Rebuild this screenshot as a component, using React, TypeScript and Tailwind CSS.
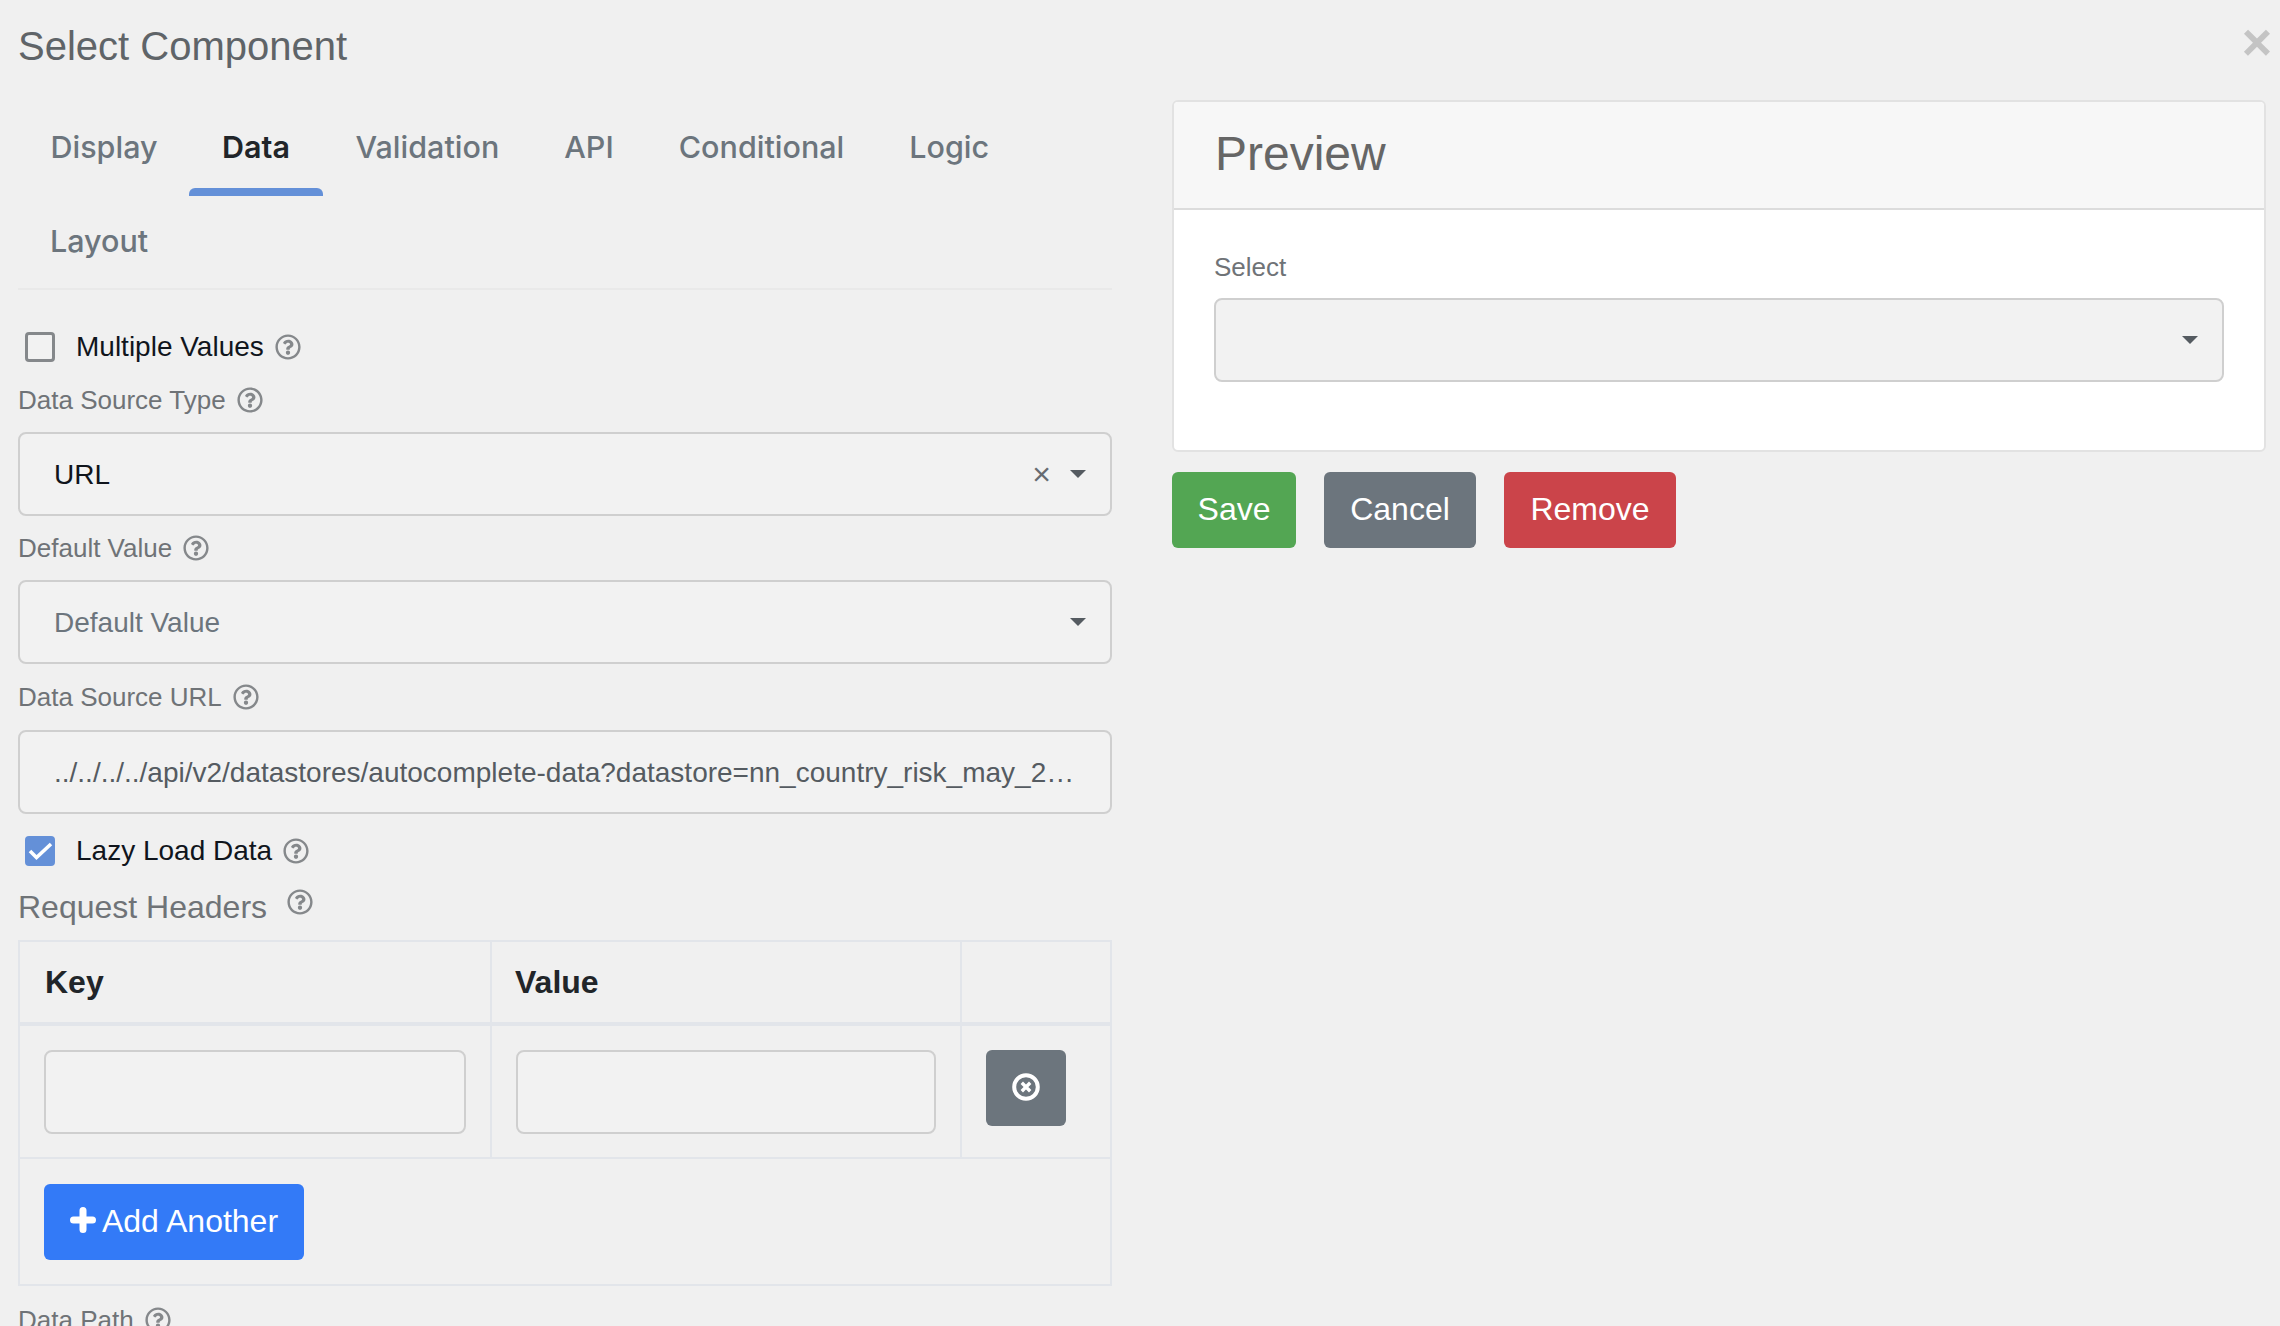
import React from 'react';
import { FaRegQuestionCircle } from 'react-icons/fa';

const tabs = ['Display', 'Data', 'Validation', 'API', 'Conditional', 'Logic'];

function Help({ className = '' }: { className?: string }) {
  return <FaRegQuestionCircle className={`inline-block w-[26px] h-[26px] text-[#85888b] ${className}`} />;
}

function Caret() {
  return <span className="w-0 h-0 border-x-[8px] border-x-transparent border-t-[8px] border-t-[#555b61]" />;
}

function FieldLabel({ text }: { text: string }) {
  return (
    <div className="flex items-center gap-[11px] h-[32px] text-[26px] text-[#6f7377]">
      <span>{text}</span>
      <Help />
    </div>
  );
}

export default function App() {
  return (
    <div className="relative h-[1326px] w-[2280px] overflow-hidden bg-[#f0f0f0] font-['Liberation_Sans',Arial,sans-serif]">
      <button className="absolute right-[8px] top-[17px] text-[52px] leading-[50px] font-bold text-[#c4c4c4]">×</button>
      <div className="flex gap-[60px] pl-[18px]">
        {/* Left column */}
        <div className="w-[1094px] shrink-0">
          <h1 className="h-[100px] pt-[22px] text-[40px] leading-[48px] text-[#5f6468]">Select Component</h1>

          <div className="border-b-2 border-[#e9e9e9] h-[190px]">
            <div className="flex">
              {tabs.map((t) => (
                <div
                  key={t}
                  className={`flex flex-col justify-between h-[96px] pt-[27px] text-[30.5px] leading-[40px] font-['Inter',sans-serif] ${
                    t === 'Data' ? 'font-semibold text-[#212529]' : 'font-medium text-[#6c757d]'
                  }`}
                >
                  <span className={t === 'Data' ? 'px-[33px]' : t === 'Display' ? 'pl-[32.5px] pr-[31.5px]' : 'px-[32.5px]'}>{t}</span>
                  {t === 'Data' && <span className="h-[8px] rounded-t-[6px] bg-[#6490d8]" />}
                </div>
              ))}
            </div>
            <div className="pl-[32px] pt-[25px] text-[30.5px] leading-[40px] font-medium font-['Inter',sans-serif] text-[#6c757d]">Layout</div>
          </div>

          <div className="flex items-center h-[32px] mt-[41px] pl-[7px]">
            <span className="w-[30px] h-[30px] rounded-[4px] border-[3px] border-[#85888b] bg-[#f2f2f2]" />
            <span className="ml-[21px] text-[28px] text-[#10151c]">Multiple Values</span>
            <Help className="ml-[11px]" />
          </div>

          <div className="mt-[21px]"><FieldLabel text="Data Source Type" /></div>
          <div className="mt-[16px] flex items-center h-[84px] rounded-[8px] border-2 border-[#cfcfcf] bg-[#f2f2f2] pl-[34px] pr-[24px] text-[28px] text-[#10151c]">
            <span className="flex-1 pt-[1px]">URL</span>
            <span className="mr-[19px] text-[32px] leading-none text-[#666b70]">×</span>
            <Caret />
          </div>

          <div className="mt-[16px]"><FieldLabel text="Default Value" /></div>
          <div className="mt-[16px] flex items-center h-[84px] rounded-[8px] border-2 border-[#cfcfcf] bg-[#f2f2f2] pl-[34px] pr-[24px] text-[28px] text-[#6c757d]">
            <span className="flex-1 pt-[2px]">Default Value</span>
            <Caret />
          </div>

          <div className="mt-[17px]"><FieldLabel text="Data Source URL" /></div>
          <div className="mt-[17px] flex items-center h-[84px] rounded-[8px] border-2 border-[#cfcfcf] bg-[#f2f2f2] pl-[34px] pr-[35px] pt-[2px] text-[28px] text-[#555b61]">
            <span className="truncate">../../../../api/v2/datastores/autocomplete-data?datastore=nn_country_risk_may_2021&amp;field=country</span>
          </div>

          <div className="flex items-center h-[32px] mt-[21px] pl-[7px]">
            <span className="w-[30px] h-[30px] rounded-[4px] bg-[#6490d8]">
              <svg viewBox="0 0 30 30" className="w-[30px] h-[30px]" fill="none" stroke="white" strokeWidth="3.6">
                <path d="M5 15l6.5 6.5L26 8" />
              </svg>
            </span>
            <span className="ml-[21px] text-[28px] text-[#10151c]">Lazy Load Data</span>
            <Help className="ml-[11px]" />
          </div>

          <div className="flex items-start gap-[20px] h-[40px] mt-[20px] text-[32px] leading-[40px] text-[#6f7377]">
            <span>Request Headers</span>
            <Help className="mt-[2px]" />
          </div>

          <table className="mt-[13px] w-[1094px] table-fixed border-collapse border-2 border-[#e2e5ea]">
            <thead>
              <tr className="h-[83px]">
                <th className="w-[472px] border-2 border-b-4 border-[#e2e5ea] pl-[25px] pb-[1px] text-left text-[32px] font-bold text-[#212529]">Key</th>
                <th className="w-[470px] border-2 border-b-4 border-[#e2e5ea] pl-[23px] pb-[1px] text-left text-[32px] font-bold text-[#212529]">Value</th>
                <th className="border-2 border-b-4 border-[#e2e5ea]" />
              </tr>
            </thead>
            <tbody>
              <tr className="h-[134px]">
                <td className="border-2 border-[#e2e5ea] px-[24px]">
                  <div className="h-[84px] rounded-[8px] border-2 border-[#cfcfcf] bg-[#f2f2f2]" />
                </td>
                <td className="border-2 border-[#e2e5ea] px-[24px]">
                  <div className="h-[84px] rounded-[8px] border-2 border-[#cfcfcf] bg-[#f2f2f2]" />
                </td>
                <td className="border-2 border-[#e2e5ea] pl-[24px] align-top pt-[24px]">
                  <button className="flex items-center justify-center w-[80px] h-[76px] rounded-[6px] bg-[#6c757d]">
                    <svg viewBox="0 0 28 28" className="w-[28px] h-[28px] mb-[2px]" fill="none" stroke="white">
                      <circle cx="14" cy="14" r="11.8" strokeWidth="4" />
                      <path d="M9.8 9.8l8.4 8.4M18.2 9.8l-8.4 8.4" strokeWidth="3.4" />
                    </svg>
                  </button>
                </td>
              </tr>
              <tr className="h-[127px]">
                <td colSpan={3} className="px-[24px]">
                  <button className="flex items-center gap-[6px] h-[76px] w-[260px] justify-center rounded-[6px] bg-[#337af7] pb-[2px] text-[32px] text-white">
                    <svg viewBox="0 0 26 26" className="w-[26px] h-[26px] mb-[2px]" fill="none" stroke="white" strokeWidth="7" strokeLinecap="round">
                      <path d="M13 3.5v19M3.5 13h19" />
                    </svg>
                    Add Another
                  </button>
                </td>
              </tr>
            </tbody>
          </table>

          <div className="mt-[18px]"><FieldLabel text="Data Path" /></div>
        </div>

        {/* Right column */}
        <div className="w-[1094px] shrink-0 pt-[100px]">
          <div className="h-[352px] rounded-[6px] border-2 border-[#e2e2e2] bg-white overflow-hidden">
            <div className="flex items-center h-[108px] border-b-2 border-[#dcdcdc] bg-[#f7f7f7] pb-[2px] pl-[41px] text-[48px] text-[#666666]">Preview</div>
            <div className="px-[40px] pt-[41px]">
              <div className="text-[26px] leading-[32px] text-[#6f7377]">Select</div>
              <div className="mt-[15px] flex items-center justify-end h-[84px] rounded-[8px] border-2 border-[#cfcfcf] bg-[#f2f2f2] pr-[24px]">
                <Caret />
              </div>
            </div>
          </div>
          <div className="flex gap-[28px] mt-[20px] text-[32px] text-white">
            <button className="h-[76px] w-[124px] rounded-[6px] bg-[#53a653] pb-[2px]">Save</button>
            <button className="h-[76px] w-[152px] rounded-[6px] bg-[#6c757d] pb-[2px]">Cancel</button>
            <button className="h-[76px] w-[172px] rounded-[6px] bg-[#cb444a] pb-[2px]">Remove</button>
          </div>
        </div>
      </div>
    </div>
  );
}
